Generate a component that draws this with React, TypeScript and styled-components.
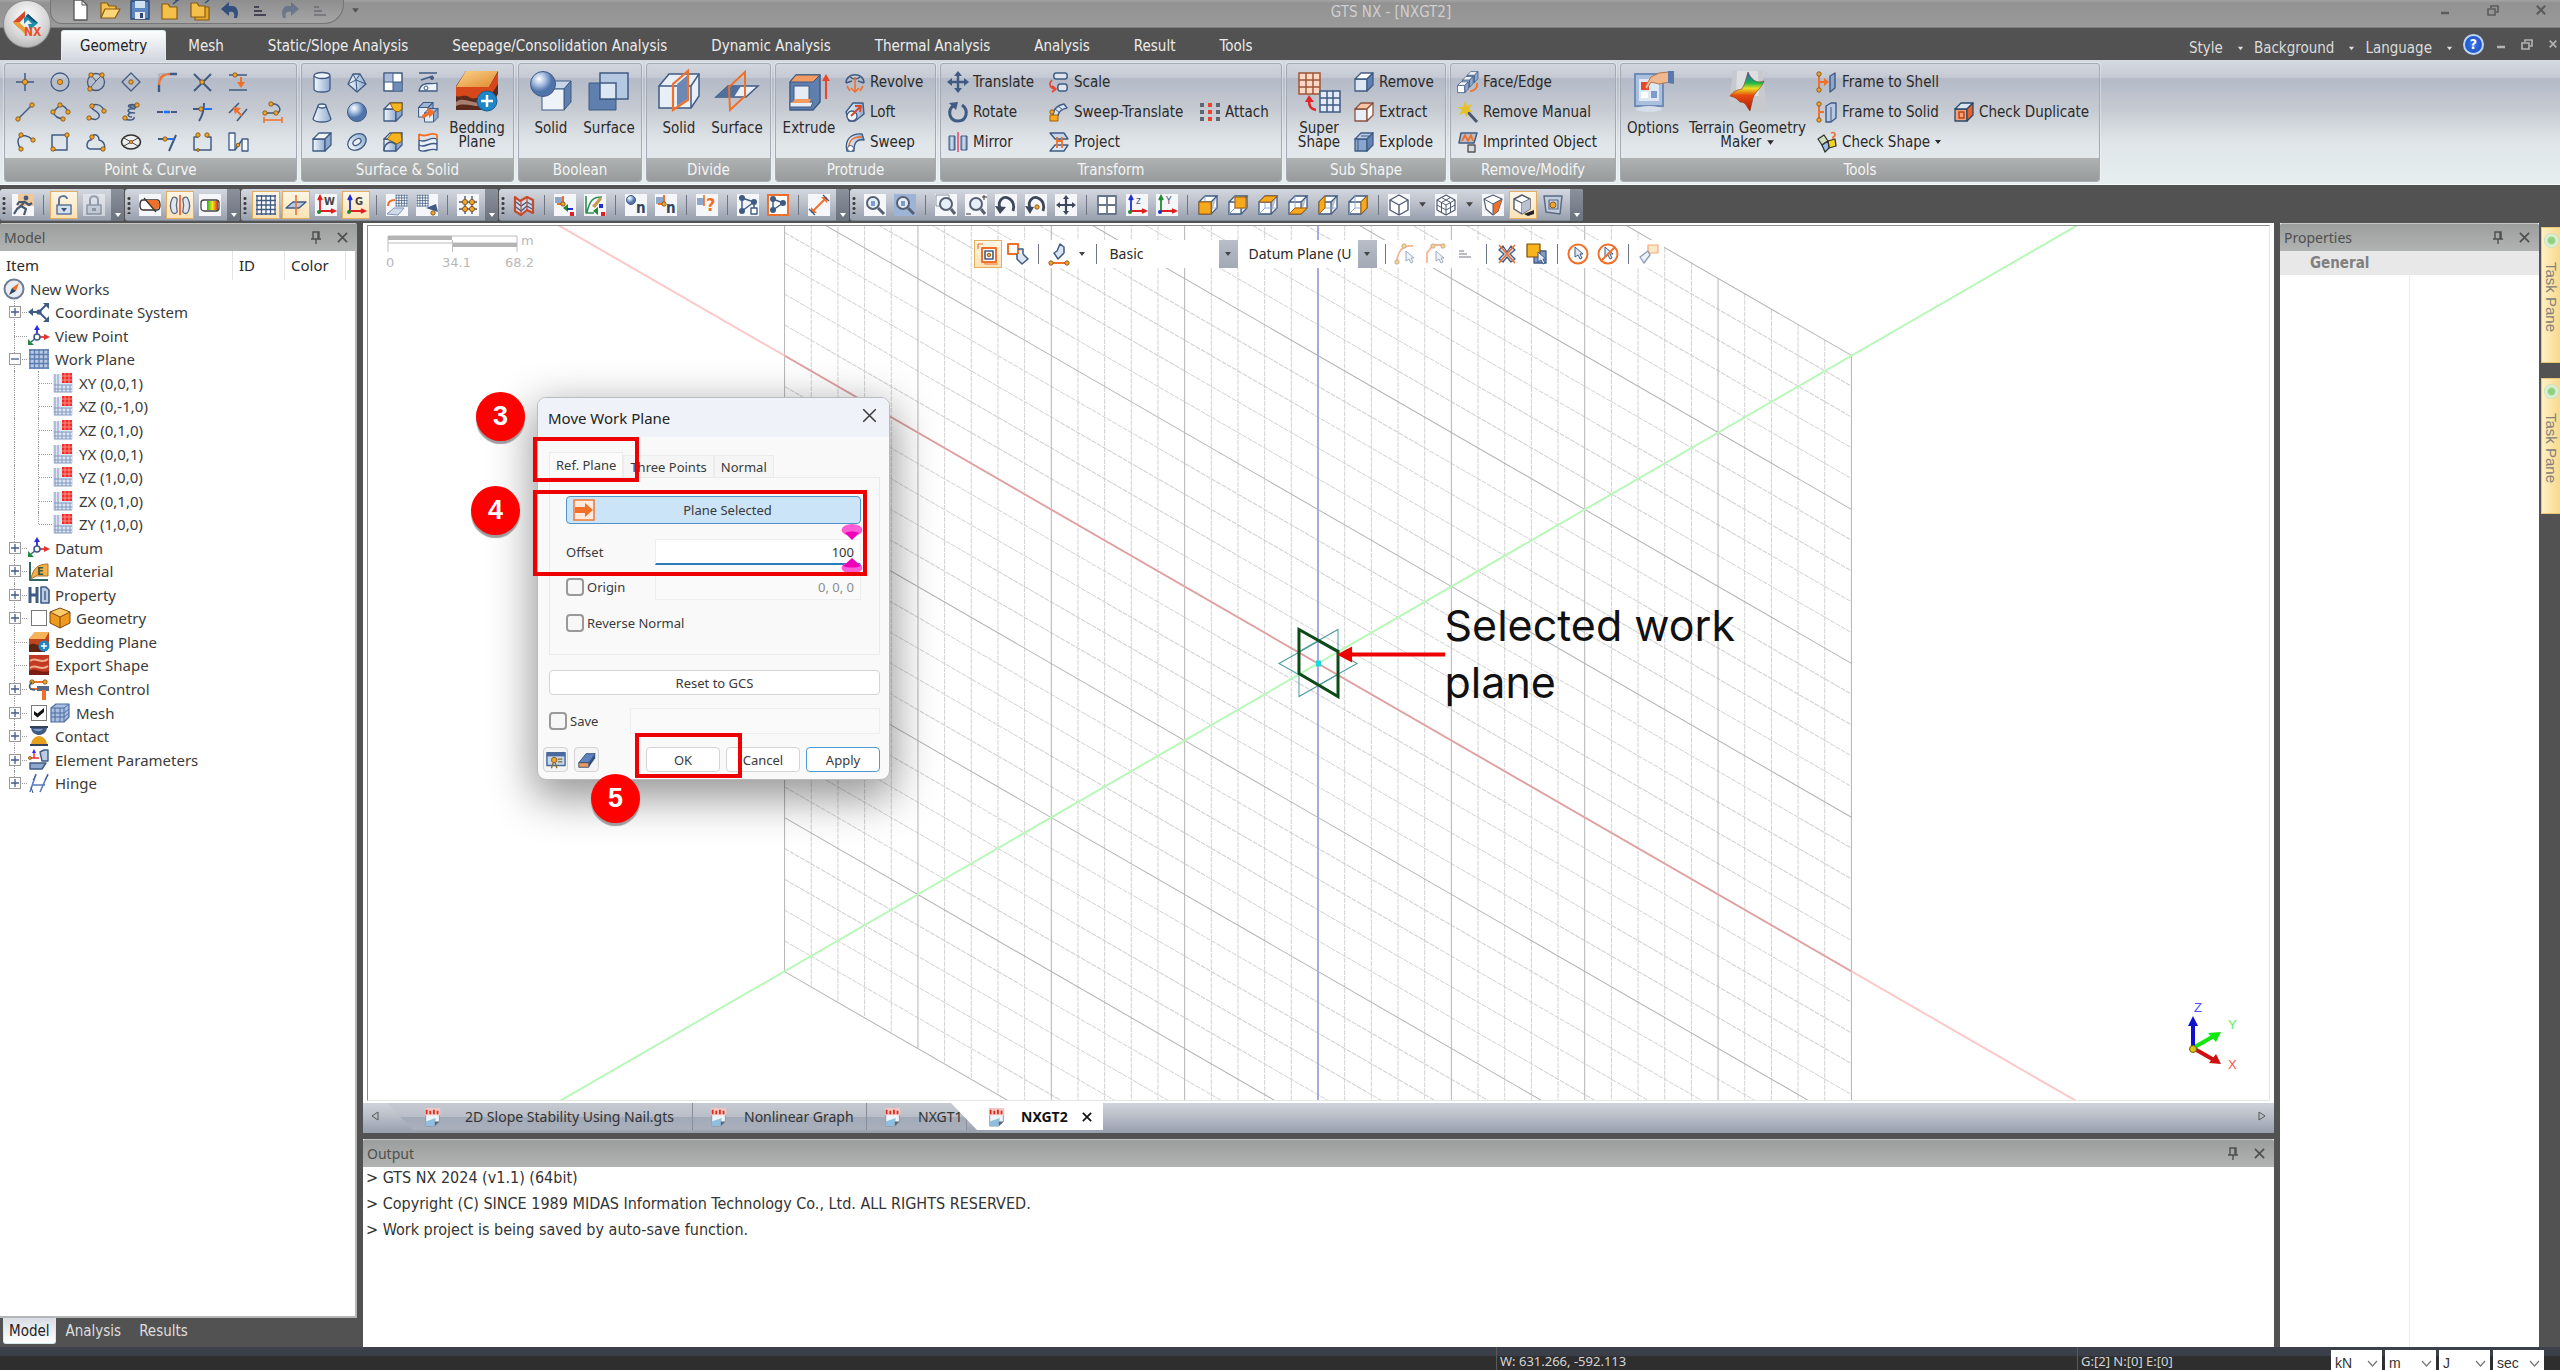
import React from 'react';
import styled, { createGlobalStyle, css } from 'styled-components';

/* ---------- palette and type ---------- */
const N = '#3f5b84';
const OR = '#f0702a';
const UI = '"DejaVu Sans Condensed", "Noto Sans", sans-serif';
const NOTO = '"Noto Sans", "Open Sans", sans-serif';

const Global = createGlobalStyle`
  *, *::before, *::after { box-sizing: border-box; }
  html, body { margin: 0; height: 100%; overflow: hidden; background: #525252; }
  body { font-family: ${UI}; font-size: 15px; color: #2a2a2a; }
  button, input, select { font: inherit; color: inherit; margin: 0; }
  button { background: none; border: 0; padding: 0; white-space: nowrap; }
  ul { list-style: none; margin: 0; padding: 0; }
`;

/* ---------- icon drawing helpers ---------- */
type El = React.ReactElement;
const l = (d: string, c = N, w = 1.5, f = 'none') => <path key={d + c} d={d} stroke={c} strokeWidth={w} fill={f} strokeLinejoin="round" />;
const f = (d: string, c: string) => <path key={d + c} d={d} fill={c} />;
const dot = (x: number, y: number, r = 2.2) => <circle key={`${x},${y}`} cx={x} cy={y} r={r} fill="#efa52a" stroke="#7a4a12" strokeWidth="0.8" />;
const ball = (x: number, y: number, r = 2.6) => <circle key={`b${x},${y}`} cx={x} cy={y} r={r} fill={N} />;
const cube = (front = 'url(#blue)', top = '#f2f6fb', side = '#8ea8cc', c = N) => (
  <g key={front + top + side} stroke={c} strokeWidth="1.3" strokeLinejoin="round">
    <path d="M2 8H14V20H2Z" fill={front} />
    <path d="M2 8L8 2H20L14 8Z" fill={top} />
    <path d="M14 8L20 2V14L14 20Z" fill={side} />
  </g>
);
const wire = (extra: El) => (
  <g>
    <path d="M2 8H14V20H2ZM2 8L8 2H20L14 8M20 2V14L14 20" fill="#fff" stroke={N} strokeWidth="1.3" />
    <path d="M8 2V14H20M8 14L2 20" stroke="#8aa4cc" strokeWidth="0.9" fill="none" />
    {extra}
  </g>
);
const grid = (c = N, n = 4, bg = '#fff') => (
  <g>
    <rect x="1" y="1" width="20" height="20" fill={bg} />
    {Array.from({ length: n + 1 }, (_, i) => 2 + (i * 18) / n).map(p => <path key={p} d={`M${p} 1V21M1 ${p}H21`} stroke={c} strokeWidth="1.3" />)}
  </g>
);
const lens = (x = 9, y = 9, r = 6) => (
  <g fill="none">
    <circle cx={x} cy={y} r={r} stroke="#566072" strokeWidth="2" fill="#e6eef8" />
    <path d={`M${x + r - 1} ${y + r - 1}L20 20`} stroke="#566072" strokeWidth="3" />
  </g>
);
const triad = (a: string, b: string, c: string) => (
  <g fill="none" strokeWidth="1.8"><path d="M5 17V3M3 6L5 2L7 6" stroke={a} /><path d="M5 17H19M16 15L20 17L16 19" stroke={b} /><circle cx="4" cy="18" r="2" fill={c} /></g>
);
const white = <rect key="w" width="22" height="22" fill="#f4f6f9" />;
const cursor = (x: number, y: number) => <path key={`c${x}`} d={`M${x} ${y}V${y + 10}L${x + 3} ${y + 8}L${x + 5} ${y + 12}L${x + 7} ${y + 11}L${x + 5} ${y + 7}H${x + 8}Z`} fill="#dfe8f5" stroke={N} />;

const ICONS: Record<string, React.ReactNode> = {
  point: <>{l('M11 2V20M2 11H20')}{dot(11, 11, 2.6)}</>,
  circle: <><circle cx="11" cy="11" r="9" fill="none" stroke={N} strokeWidth="1.3" />{dot(11, 11, 2.6)}</>,
  circle3: <><circle cx="11" cy="11" r="8.5" fill="none" stroke={N} strokeWidth="1.3" />{l('M6 4L11 10L17 4M11 10L5 17', N, 1)}{dot(6, 4)}{dot(17, 4)}{dot(5, 18)}</>,
  diamond: <>{l('M11 2L20 11L11 20L2 11Z', N, 1.3)}{dot(11, 11, 2.2)}</>,
  fillet: <>{l('M3 21V14M14 3H21', N, 2.4)}{l('M3 14C3 6 8 3 14 3', OR, 2.4)}{l('M3 12V3H12', '#9aa6ba', 1)}</>,
  cross: <>{l('M3 3L20 20M20 3L3 20', N, 2)}{dot(11, 11)}</>,
  drop: <>{l('M2 4H20M2 19H20', N, 1.6)}{dot(8, 4)}{l('M14 6V12', OR, 2)}{f('M10 11H18L14 17Z', OR)}</>,
  line: <>{l('M4 18L18 4')}{dot(4, 18)}{dot(18, 4)}</>,
  arc3: <>{l('M4 11L11 4C16 5 18 8 19 11M4 11C6 16 9 17 14 18')}{dot(11, 4)}{dot(4, 11)}{dot(19, 11)}{dot(14, 18)}</>,
  spline: <>{l('M19 10C17 2 6 2 7 7C8 10 16 11 14 16C12 20 8 18 4 17')}{dot(4, 17)}{dot(7, 5)}{dot(19, 10)}</>,
  helix: <>{l('M17 4C8 2 6 6 12 7C18 8 16 4 10 5M15 8C7 7 6 11 12 12M15 12C7 11 6 16 12 16M5 18C9 20 15 19 14 16')}{dot(17, 4)}{dot(5, 17)}</>,
  dash: <>{l('M1 11H7M15 11H21', N, 2)}{l('M8 11H14', '#1f6fff', 2.4)}</>,
  trim: <>{l('M2 8H11M13 2C13 12 10 17 8 20', N, 2)}{l('M12 8H21', '#1f6fff', 2)}{dot(10, 8)}</>,
  offset: <>{l('M2 12L12 2M10 20L20 8', N, 1.6)}{l('M15 15L9 9', OR, 2)}{f('M6 6L14 7L8 13Z', OR)}</>,
  dim: <>{l('M3 12H14M8 3C17 2 20 8 16 12')}{dot(9, 3)}{dot(3, 12)}{dot(14, 12)}{l('M2 19H20M2 16V22M20 16V22', OR, 1.5)}</>,
  arc: <>{l('M7 18C-1 8 8 -1 19 9')}{dot(7, 18)}{dot(19, 9)}{dot(7, 4)}</>,
  rect: <>{l('M3 4H18V19H3Z')}{dot(18, 4)}{dot(4, 18)}</>,
  closed: <>{l('M7 5C11 2 14 5 14 9C20 10 21 18 18 18H5C0 17 2 9 6 9Z')}{dot(7, 6)}{dot(18, 18)}</>,
  ellipse: <><ellipse cx="11" cy="11" rx="9.5" ry="7" fill="#eee" stroke="#333" strokeWidth="1.6" />{l('M4 7L18 15M18 7L4 15', '#444', 1)}{dot(11, 11, 1.6)}</>,
  extend: <>{l('M2 8H10M20 4L13 20', N, 2)}{l('M11 8H18', '#1f6fff', 2)}{dot(9, 8)}</>,
  openrect: <>{l('M7 6H3V19H20V6H16')}{dot(7, 4)}{dot(16, 4)}{dot(7, 19, 1.4)}</>,
  bars: <>{l('M2 2H8V19H2ZM15 8H21V20H15Z', N, 1.3, '#f4f7fb')}{l('M8 19L15 9')}{dot(11, 14, 1.8)}</>,
  cyl: <><path d="M3 5V18C3 22 19 22 19 18V5" fill="url(#blue)" stroke={N} strokeWidth="1.3" /><ellipse cx="11" cy="4.5" rx="8" ry="3" fill="#eef3fa" stroke={N} strokeWidth="1.3" /></>,
  gem: <>{l('M7 3L14 3L20 13L11 21L2 13Z', N, 1.3, 'url(#blue)')}{l('M7 3L10 9L20 13M10 9L11 21M14 3L10 9M2 13L10 9', N, 1)}</>,
  quad: <>{l('M2 2H20V20H2Z', N, 1.5, '#fff')}{f('M3 3H11V11H3Z', '#a9bcd9')}{f('M11 11H19V19H11Z', '#6f8cb8')}{l('M11 2V20M2 11H20', N, 1)}</>,
  terrain: <>{l('M2 2H20M2 20C5 9 13 14 20 12V20Z', N, 1.3, '#eef3fa')}{l('M4 9L16 5', N)}<circle cx="9" cy="17" r="2" fill="#fff" stroke={N} />{ball(15, 7, 2)}</>,
  cone: <><path d="M7 5L2 18C4 22 18 22 20 18L15 5" fill="url(#blue)" stroke={N} strokeWidth="1.3" /><ellipse cx="11" cy="5" rx="4" ry="2" fill="#eef3fa" stroke={N} strokeWidth="1.3" /></>,
  sphere: <circle cx="11" cy="11" r="9.5" fill="url(#ball)" stroke={N} />,
  filletcube: <>{cube()}<path d="M8 2H20V8C17 12 13 11 11 8Z" fill="#f7b41c" stroke="#8a5b10" /></>,
  twocube: <><g transform="scale(.8)">{cube('#e4ecf6', '#9fb6d6')}</g><g transform="translate(6 6) scale(.75)">{cube('#e4ecf6', '#9fb6d6')}</g><path d="M5 14L11 11V7L18 11L12 17V14L6 18Z" fill={OR} /></>,
  box: cube(),
  torus: <g transform="rotate(-35 11 11)"><ellipse cx="11" cy="11" rx="10" ry="7.5" fill="url(#blue)" stroke={N} strokeWidth="1.3" /><ellipse cx="11" cy="11" rx="4.5" ry="2.8" fill="#e8edf2" stroke={N} strokeWidth="1.3" /></g>,
  chamfer: <>{cube()}<path d="M5 8L10 2H19L20 10L15 13Z" fill="#f7b41c" stroke="#8a5b10" /><path d="M2 20C2 12 9 9 13 13" fill="none" stroke={N} strokeWidth="1.5" /></>,
  sheet: <>{l('M2 9C8 13 13 5 20 8V19C13 16 8 23 2 19Z', N, 1.4, '#e8eff8')}{l('M2 14C8 18 13 10 20 13', N)}{l('M2 3C8 8 13 0 20 4V8M2 3V9', OR, 1.8)}</>,
  revolve: <>{l('M2 12C2 1 20 1 20 12M2 12L8 10M20 12L14 10M5 5C9 9 13 9 17 5', N, 1.5)}{l('M11 6V21M7 17L11 21L15 17M3 15L6 20M19 15L16 20', OR, 1.6)}</>,
  loft: <>{l('M2 11L9 2H19L20 13L11 20H5Z', N, 1.4, 'url(#blue)')}<circle cx="8" cy="15" r="5" fill="#eef3fa" stroke={N} strokeWidth="1.3" />{l('M7 15L16 6M11 5L17 5L16 11', '#d9482a', 1.8)}</>,
  sweep: <>{l('M3 20C0 8 8 2 18 3L20 9C13 8 10 11 10 20Z', N, 1.4, 'url(#blue)')}{l('M5 18C4 9 10 5 18 6', OR, 1.6)}<circle cx="6.5" cy="17.5" r="3" fill="#fff" stroke={N} /></>,
  move: <>{l('M11 3V19M3 11H19', N, 2.4)}{f('M11 0L15 5H7ZM11 22L15 17H7ZM0 11L5 7V15ZM22 11L17 7V15Z', N)}</>,
  rotate: <>{l('M7 4C-1 10 3 20 11 20C20 20 22 9 15 4', N, 3)}{f('M2 2L11 1L9 9Z', N)}</>,
  mirror: <>{l('M2 5H8V19H2Z', N, 1, 'url(#bluev)')}{l('M14 5H20V19H14Z', N, 1, 'url(#bluev)')}{l('M11 1V21', '#ea5b7d', 1.8)}</>,
  scale: <>{l('M8 2H17C20 2 20 8 17 8H8C5 8 5 2 8 2Z', N, 1.5, '#dfe5ec')}{l('M12 13H17C20 13 20 20 17 20H12C9 20 9 13 12 13Z', N, 1.5, '#dfe5ec')}{l('M4 9C0 13 2 17 7 18M4 15L8 18L4 21', '#e8452a', 1.6)}</>,
  sweept: <>{l('M5 14C5 8 10 4 16 3L19 7C14 8 10 11 10 15', N, 1.4, '#dbe5f2')}{l('M7 8L12 12M10 5L15 9', N, 1)}<path d="M2 14H10V20H2Z" fill="#f7a81c" stroke="#a0600e" />{dot(4, 11)}</>,
  attach: <>{[2, 9, 16].map(y => <g key={y}><rect x="1" y={y} width="4" height="4" fill="#5d6672" /><rect x="9" y={y} width="4" height="4" fill="#e8452a" /><rect x="17" y={y} width="4" height="4" fill="#5d6672" /></g>)}</>,
  project: <>{l('M2 2H16L20 8H7Z', N, 1.4, '#c6d5ea')}{l('M2 20H16L20 14H7Z', N, 1.4, '#dfe8f4')}{l('M9 6V17M14 6V17M9 10H14', OR, 1.8)}</>,
  cremove: cube('#dce7f4', '#fff', '#5f80b0'),
  cextract: cube('#e8eff8', '#fbc6a5', '#fff', '#8a5240'),
  cexplode: <>{cube('#8ba6cc', '#b9cbe4', '#6282b2')}{l('M5 8V20M8 5H17', N, 1)}</>,
  face: <g transform="scale(.6)"><g transform="translate(15 -1)">{cube('#7f9cc8')}</g><g transform="translate(7 7)">{cube('#c6d5ea')}</g><g transform="translate(-1 16)">{cube('#fff')}</g>{l('M33 20C35 28 30 32 22 34', OR, 3)}</g>,
  wand: <>{l('M9 9L20 21', '#4a5870', 3)}{f('M8 0L10 5L15 3L12 8L16 11L11 11L10 16L7 12L2 14L5 9L0 6L6 6Z', '#e6c22a')}</>,
  imprint: <>{l('M4 2H20L17 12H2Z', N, 1.5, '#b9bfc8')}{l('M5 10L8 4L11 10L14 4L16 10', OR, 1.8)}{l('M11 14H18V21H11Z', '#555', 1.4, '#d7dade')}</>,
  frame: <>{l('M3 2V20M3 11H9', OR, 2)}{dot(3, 3)}{dot(3, 19)}{f('M8 7L13 11L8 15Z', OR)}{l('M14 5L19 2V17L14 21Z', N, 1.4, '#8ea8cc')}</>,
  frame2: <>{l('M3 2V20M3 11H8', OR, 2)}{dot(3, 3)}{dot(3, 19)}{l('M10 5L15 2H20V17L15 21H10Z', N, 1.4, '#b7c9e2')}{l('M15 6V21', N, 1)}</>,
  checks: <>{l('M2 8L8 4L12 10L6 14Z', '#333', 1.3, '#cfe0b8')}{l('M12 10L19 8L20 15L13 17Z', '#333', 1.3, '#f5d21c')}{l('M6 14L12 10L13 17L9 21Z', '#333', 1.3, '#9cc0e8')}{l('M15 2C20 0 20 5 17 6V8', OR, 1.6)}</>,
  checkd: <>{cube('#f3a27c', '#dbe5f1', '#e8602a', '#2a4a6a')}{l('M6 11H11V17H6Z', '#c33d10', 1.4)}</>,
  run: <>{white}<path d="M6 0H22V12H6Z" fill="#f0c89a" />{ball(14, 4, 2.4)}{l('M13 7L9 12L14 15L12 21M9 12L5 15L2 20M12 8L7 8L5 11M13 8L17 11L20 9', '#4a5870', 2.2)}</>,
  unlock: <>{l('M6 11V6C6 1 14 1 14 5', '#5d7598', 2)}{l('M4 11H18V20H4Z', '#5d7598', 1.5, '#d5e0ee')}{f('M8 14H14L11 18Z', N)}</>,
  lock: <g opacity=".55">{white}{l('M7 11V6C7 1 15 1 15 6V11', '#6d7c92', 2)}{l('M4 11H18V20H4Z', '#6d7c92', 1.5, '#d5dce5')}{f('M9 14H13V17H9Z', '#6d7c92')}</g>,
  pill: <>{white}{l('M4 6H18C22 6 22 16 18 16H4C0 16 0 6 4 6Z', '#333', 1.4, '#fff')}{f('M6 6H18C21 7 21 15 18 15H15Z', OR)}{l('M5 4L17 18', '#333', 1.2)}</>,
  pipe: <>{l('M3 5C1 9 1 14 3 18C5 21 9 19 8 16C7 12 7 10 8 7C9 3 4 2 3 5ZM19 5C21 9 21 14 19 18C17 21 13 19 14 16C15 12 15 10 14 7C13 3 18 2 19 5Z', '#5d6a80', 1.3, '#dfe6ee')}{l('M11 1V21', '#e8452a', 1.5)}</>,
  rainbow: <>{white}<rect x="2" y="6" width="18" height="11" rx="3" fill="#fff" stroke="#444" strokeWidth="1.3" /><rect x="8" y="7" width="11" height="9" fill="url(#rain)" /></>,
  grid: grid(),
  plane: <>{l('M1 14L8 8H21L14 14Z', N, 1.3, '#b9cbe4')}{l('M11 1V21', OR, 1.6)}</>,
  axW: <>{white}{triad('#e02020', '#e02020', '#208a30')}<text x="9" y="11" fontSize="11" fontWeight="700" fill="#444" fontFamily={UI}>W</text></>,
  axG: <>{triad('#2030d0', '#e02020', '#208a30')}<text x="10" y="11" fontSize="11" fontWeight="700" fill="#444" fontFamily={UI}>G</text></>,
  gridmove: <>{white}<g transform="translate(9 0) scale(.6)">{grid()}</g>{l('M1 20L8 14H18L12 21Z', '#7d93b8', 1, '#cfdaea')}{l('M2 12C2 7 5 6 9 6', OR, 2)}</>,
  gridpick: <>{white}<g transform="scale(.6)">{grid()}</g>{f('M10 14L20 10L22 18Z', N)}{dot(17, 19)}</>,
  hash: <>{white}{l('M8 2V20M15 2V20M2 8H20M2 15H20', '#4d5a70', 1.4)}{[8, 15].map(x => [8, 15].map(y => dot(x, y, 2.6)))}</>,
  fold: <>{l('M2 3L7 7L14 3L20 6V19L14 16L8 21L2 17Z', '#c8482a', 2.2, '#cfdbe9')}{l('M3 8L8 12L14 8L19 11M3 13L8 17L14 12L19 15', N, 1.4)}{l('M8 7V20M14 4V16', '#c8482a', 1.2)}</>,
  node1: <>{white}{l('M9 2V10M3 4H9M3 10H9', OR, 2)}<rect x="1" y="3" width="7" height="6" fill="#8ea8cc" />{dot(9, 10)}{f('M9 14L14 10V18Z', '#208a30')}{l('M13 15H19', '#2030d0', 2)}{f('M16 18H20V22H16Z', '#e02020')}</>,
  node2: <>{white}{l('M2 2V19H10M3 18C6 6 9 3 18 3', '#2f8f50', 1.6)}{f('M8 12L16 3L18 5L11 14Z', '#c79b52')}{f('M9 17L14 13V21Z', '#208a30')}{f('M15 10H19V14H15Z', '#2030d0')}{f('M17 18H21V22H17Z', '#e02020')}</>,
  nn1: <>{white}<circle cx="6" cy="6" r="4.5" fill="url(#ball)" stroke={N} /><text x="11" y="19" fontSize="15" fontWeight="700" fill="#33435e" fontFamily={UI}>n</text></>,
  nn2: <>{white}<rect x="1" y="3" width="7" height="7" fill="#8ea8cc" />{l('M9 1V10M3 10H10', OR, 2)}{dot(9, 10)}<text x="11" y="19" fontSize="15" fontWeight="700" fill="#33435e" fontFamily={UI}>n</text></>,
  ask: <>{white}<rect x="1" y="4" width="7" height="7" fill="#8ea8cc" />{l('M8 1V12', OR, 1.6)}<text x="10" y="17" fontSize="18" fontWeight="700" fill={OR} fontFamily={UI}>?</text></>,
  net1: <>{white}{l('M5 4L17 8L5 17ZM17 8V14')}{ball(5, 4, 3)}{ball(17, 8, 3)}{ball(5, 17, 3)}{l('M14 14H20V20H14Z', N, 1.4, '#fff')}</>,
  net2: <><rect x="1" y="1" width="20" height="20" fill="#fff" stroke={OR} strokeWidth="2" />{l('M6 5L16 9L6 16Z')}{ball(6, 5, 3)}{ball(16, 9, 3)}{ball(6, 16, 3)}</>,
  measure: <>{white}{l('M5 17L17 5', OR, 2)}{f('M3 13L9 19L3 19ZM13 3H19V9Z', OR)}{l('M1 15L7 21M15 1L21 7', N, 1.4)}</>,
  zoomA: <>{white}{lens()}{f('M7 7H11V12H7Z', '#7f9cc8')}</>,
  zoomB: <><rect width="22" height="22" fill="#9db3d8" />{lens()}{f('M7 7H11V12H7Z', '#7f9cc8')}</>,
  zoomC: <>{white}{l('M1 1H14V12H1Z', '#8a94a4', 1)}{lens(11, 10, 6)}</>,
  zoomD: <>{white}{lens(11, 10, 6)}{l('M17 3H22M19 1V6M1 20H6', '#333', 1)}</>,
  rot1: <>{white}{l('M5 14C2 6 9 2 13 4C18 6 20 12 18 17', '#3d475a', 2.8)}{f('M0 12L11 13L5 20Z', '#3d475a')}</>,
  rot2: <>{white}{l('M5 14C2 6 9 2 13 4C18 6 20 12 18 17', '#3d475a', 2.8)}{f('M0 12L9 13L5 20Z', '#3d475a')}{dot(12, 13)}</>,
  pan: <>{white}{l('M11 4V18M4 11H18', '#3d475a', 2.2)}{f('M11 1L14 5H8ZM11 21L14 17H8ZM1 11L5 8V14ZM21 11L17 8V14Z', '#3d475a')}</>,
  four: <>{l('M2 2H20V20H2Z', '#66748c', 1.8, '#fff')}{l('M11 2V20M2 11H20', '#66748c', 1.8)}</>,
  axz: <>{white}{triad('#2030d0', '#e02020', '#208a30')}<text x="10" y="10" fontSize="10" fill={N} fontFamily={UI}>z</text></>,
  axy: <>{white}{triad('#208a30', '#e02020', '#2030d0')}<text x="10" y="10" fontSize="10" fill={N} fontFamily={UI}>Y</text></>,
  vFront: wire(<rect x="2" y="8" width="12" height="12" fill="#f7a81c" stroke="#a0600e" />),
  vBack: wire(<rect x="8" y="3" width="11" height="11" fill="#f7a81c" stroke="#a0600e" />),
  vTop: wire(<path d="M2 8L8 2H20L14 8Z" fill="#f7a81c" stroke="#a0600e" />),
  vBottom: wire(<path d="M2 20L8 14H20L14 20Z" fill="#f7a81c" stroke="#a0600e" />),
  vLeft: wire(<path d="M2 8L8 2V14L2 20Z" fill="#f7a81c" stroke="#a0600e" />),
  vRight: wire(<path d="M14 8L20 2V14L14 20Z" fill="#f7a81c" stroke="#a0600e" />),
  hex: <>{white}{l('M11 1L20 6V16L11 21L2 16V6Z', '#4d5a70', 1.4, '#fff')}{l('M2 6L11 11L20 6M11 11V21', '#4d5a70', 1.4)}</>,
  hexmesh: <>{white}{l('M11 1L20 6V16L11 21L2 16V6Z', '#4d5a70', 1.2, '#fff')}{l('M2 6L11 11L20 6M11 11V21M2 11L11 16L20 11M6.5 3.5L15.5 8.5V18.5M15.5 3.5L6.5 8.5V18.5', '#4d5a70', 1)}</>,
  shade: <>{white}{l('M11 1L20 5L16 17L11 21L4 15L2 5Z', '#4d5a70', 1.2, '#fff')}{f('M11 10L20 5L16 17L11 21Z', OR)}{l('M2 5L11 10L20 5M11 10V21', '#4d5a70', 1)}</>,
  solidhex: <><path d="M12 20L22 16V20L16 22Z" fill="#222" />{l('M10 1L18 5V15L10 20L2 15V5Z', '#4d5a70', 1.4, '#fff')}{l('M2 5L10 9L18 5M10 9V20', '#4d5a70', 1.2)}{f('M10 9L18 5V15L10 20Z', '#b9c2ce')}</>,
  persp: <>{l('M2 2H20L18 20L4 18Z', '#5a6a86', 1.5, '#c3cddc')}{l('M7 6H16V15H7Z', '#5a6a86', 1.2)}{dot(11, 11, 3)}</>,
  selA: <>{l('M1 1H6M1 1V6M21 21H8V8', OR, 1.2)}{l('M5 5H19V19H5Z', OR, 2, '#fff')}{l('M8 8H16V16H8Z', N, 1.6)}{dot(12, 12, 1.8)}</>,
  selB: <>{l('M1 1H11V11H1Z', OR, 2, '#fff')}{l('M11 6H16V11M16 11L21 16L15 21L10 16V11', N, 1.5, '#dbe5f2')}</>,
  selC: <>{l('M2 20H20', OR, 2)}{dot(3, 20)}{dot(19, 20)}{l('M12 1L16 4V10L10 16L6 10L9 8Z', N, 1.5, '#dbe5f2')}</>,
  selD: <g opacity=".5">{l('M2 20C2 8 8 2 18 3', OR, 1.8)}{dot(9, 3)}{dot(2, 19)}{cursor(11, 8)}</g>,
  selE: <g opacity=".5">{l('M2 20V10L8 2H18', OR, 1.8)}{dot(8, 3)}{dot(18, 3)}{cursor(11, 8)}</g>,
  list: <g opacity=".4">{l('M4 8H9M4 11H12M4 14H16', '#556', 2)}</g>,
  xsel: <>{l('M3 7L7 3L11 9L15 3L19 7L14 11L19 16L15 19L11 14L7 19L3 16L8 11Z', N, 1.3, '#dbe5f2')}{l('M3 2L19 20M19 2L3 20', OR, 1.6)}</>,
  qsel: <>{l('M8 8H20V20H8Z', N, 1.3, '#7f9cc8')}{l('M1 1H14V14H1Z', '#7a4a12', 1.2, '#f7b41c')}{cursor(12, 9)}</>,
  csel: <><circle cx="11" cy="11" r="9.5" fill="#fff" stroke={OR} strokeWidth="2" />{cursor(8, 4)}</>,
  cno: <><circle cx="11" cy="11" r="9.5" fill="#fff" stroke={OR} strokeWidth="2" />{cursor(8, 4)}{l('M4 18L18 4', OR, 2)}</>,
  brush: <g opacity=".6">{l('M10 2H20V10H10Z', OR, 1.2, '#f8d8a0')}{l('M10 8L2 14L6 20L12 12Z', N, 1.3, '#dfe8f5')}</g>,
  doc: <>{l('M3 2H18V16L13 21H3Z', '#8a94a4', 1, '#eef4fb')}{f('M2 1H19V9H2Z', '#f3c8c4')}{l('M4 8V3M8 8V4M12 8V3M16 8V4', '#e02a1a', 2)}{f('M3 16L14 12L13 21H3Z', '#8fbede')}{f('M13 21L18 16H13Z', '#5a6472')}</>,
  coord: <>{l('M2 11H11L18 4M11 11L18 18', N, 2)}{f('M0 11L5 7V15Z', N)}{ball(11, 11)}{f('M15 2H21V8ZM15 21H21V15Z', N)}</>,
  datum: <>{l('M9 11V4', '#2a2af0', 1.8)}{f('M9 0L12 5H6Z', '#2a2af0')}{l('M10 12H16', '#e83030', 1.8)}{f('M22 12L16 9V15Z', '#e83030')}{l('M8 13L3 17', N, 1.4)}{f('M0 14V20H6Z', '#208a40')}<circle cx="9" cy="12" r="3" fill="#fff" stroke={N} strokeWidth="1.6" /></>,
  wp: grid('#5d7db0', 4, '#b9cae6'),
  wpi: <>{f('M1 2H21V20H1Z', '#dfe6f2')}{l('M3 2V20M6 2V20M2 17H20M2 20H20M2 13H20M10 13V20M14 13V20M18 13V20', '#8098c0', 1)}<rect x="10" y="1" width="10" height="10" fill="#f02a2a" />{l('M13 1V11M17 1V11M10 4H20M10 8H20', '#ff9080', 1)}</>,
  mat: <>{l('M2 2V20H20', '#2a6a60', 2)}{l('M3 19C5 8 10 4 20 4V16H8Z', '#a8742a', 1, '#f5b04a')}<text x="9" y="15" fontSize="11" fontWeight="700" fill="#3a5a3a" fontFamily={UI}>E</text></>,
  prop: <>{l('M2 3V19M9 3V19M2 11H9', N, 3)}{l('M13 3H18L21 6V19H13Z', N, 1.6, '#bccce4')}{l('M17 7V16', N, 1.4)}</>,
  geo: <>{f('M11 1L21 5V16L11 21L1 16V5Z', '#ef9a1c')}{f('M11 1L21 5L11 10L1 5Z', '#fccb6a')}{l('M1 5L11 10L21 5M11 10V21', '#7a4a12', 1)}{l('M11 1L21 5V16L11 21L1 16V5Z', '#7a4a12', 1)}</>,
  bed: <>{f('M1 8L7 1H21V14L15 21H1Z', '#c0451c')}{f('M1 8L7 1H21L17 8Z', '#f5b45a')}{f('M1 14C7 10 12 18 17 13V21H1Z', '#5d2412')}<circle cx="16" cy="15" r="5.5" fill="#1f86c8" />{l('M16 12V18M13 15H19', '#fff', 1.4)}</>,
  exp: <>{f('M1 1H21V21H1Z', '#c23a24')}{l('M2 7C8 2 13 11 20 5M2 14C8 9 13 18 20 12', '#f0b090', 2)}{f('M1 17C8 13 13 20 21 17V21H1Z', '#7a1c10')}</>,
  mctl: <>{l('M3 4H18M2 11H10', OR, 2)}{dot(4, 4)}{dot(17, 4)}{l('M4 4C0 8 1 12 7 12', N, 1.6)}{f('M9 8H21V13H9Z', '#5a6a86')}{f('M14 12H18V22H14Z', OR)}</>,
  mesh: <>{l('M2 6L7 2H20V15L15 20H2Z', '#4d6ca0', 1.2, '#a9bfe2')}{l('M2 11H15M2 15H15M6 6V20M11 6V20M2 6H15V20M15 6L20 2M15 11L20 7M15 15L20 11', '#4d6ca0', 1)}</>,
  contact: <>{f('M3 2H19C19 8 14 10 11 10C8 10 3 8 3 2Z', N)}{f('M3 20C3 14 8 11 11 11C14 11 19 14 19 20Z', '#e8a01c')}{l('M2 2H20M2 20H20', '#33435e', 2)}{f('M5 4H15C13 7 8 7 5 4Z', '#7f9cc8')}</>,
  elem: <>{l('M6 2V9M3 9H11', '#e83030', 1.4)}{f('M6 0L8 4H4Z', '#2a2af0')}{dot(2, 9, 1.5)}{l('M12 3L16 1H20V12H14Z', N, 1.4, '#bccce4')}{l('M2 14H18L14 20H2Z', N, 1.4, '#8ea8cc')}</>,
  hinge: <>{l('M8 2L2 20M20 2L12 20M4 13H17', '#5a78c0', 1.6)}{l('M5 8L8 3M17 8L20 3M3 15L5 21', N, 1)}</>,
  compass: <><circle cx="11" cy="11" r="9.5" fill="#e8edf3" stroke="#6d7c92" strokeWidth="2" />{f('M16 5L13 13L9 10Z', OR)}{f('M6 17L13 13L9 10Z', '#33435e')}</>,
  arrowin: <><rect x="1" y="1" width="20" height="20" fill="#ffe9dc" stroke={OR} strokeWidth="1.4" />{f('M2 8H12V4L20 11L12 18V14H2Z', OR)}</>,
  preview: <>{l('M1 3H21V17H1Z', '#4a6a9c', 1.6, '#c6d8f0')}{f('M1 3H21V7H1Z', '#4a6a9c')}{dot(9, 11, 3)}{l('M13 10H18M13 13H18M8 14L6 20M10 14L12 20', '#8a6a2a', 1.4)}</>,
  eraser: <>{l('M2 14L10 4H20L13 14Z', '#33507c', 1, '#5d82bd')}{l('M2 14H13V19H2Z', '#33507c', 1, '#f09a5a')}{f('M13 14L20 4V9L13 19Z', '#33507c')}</>,
  qnew: <>{l('M5 1H13L18 6V21H5Z', '#555', 1.3, '#fff')}{l('M13 1V6H18', '#555', 1)}</>,
  qopen: <>{l('M2 19V4H8L10 7H17V10', '#8a5b10', 1.2, '#f5c04a')}{l('M2 19L6 10H21L16 19Z', '#8a5b10', 1.2, '#fbd67a')}</>,
  qsave: <>{l('M2 2H20V20H2Z', '#2a4a7c', 1.4, '#5d86c0')}{f('M6 2H16V9H6Z', '#cfe0f0')}{f('M6 13H16V20H6Z', '#e8e8e8')}{f('M11 14H14V19H11Z', '#2a4a7c')}</>,
  qfold: <>{l('M3 5H9L11 8H18V20H3Z', '#8a5b10', 1.2, '#f5c04a')}{l('M14 5L19 1M16 1H20', '#33507c', 1.4)}</>,
  qfold2: <>{l('M6 8H20V21H6Z', '#8a5b10', 1.2, '#e0a82a')}{l('M2 4H8L10 7H16V18H2Z', '#8a5b10', 1.2, '#f5c04a')}{l('M16 4L20 1', '#33507c', 1.4)}</>,
  undo: <>{f('M2 10L10 3V7H14C19 8 20 14 18 19H15C16 14 15 12 10 13V17Z', '#33507c')}</>,
  redo: <g opacity=".45">{f('M20 10L12 3V7H8C3 8 2 14 4 19H7C6 14 7 12 12 13V17Z', '#33507c')}</g>,
  qlist: <>{l('M5 8H10M5 12H13M5 16H17', '#445', 2)}</>,
  qlist2: <g opacity=".4">{l('M5 8H10M5 12H13M5 16H17', '#445', 2)}</g>,
};

const BIG: Record<string, React.ReactNode> = {
  bedding: <><path d="M1 16L11 1H43V24L34 40H1Z" fill="#5b2a1c" /><path d="M1 17L11 1H43L34 17Z" fill="url(#sand)" /><path d="M1 17H34L43 2V14L34 28C26 22 22 32 14 27C9 24 5 28 1 26Z" fill="#d8471a" /><path d="M1 32C10 25 20 38 34 30V34C22 40 12 31 1 36Z" fill="#a88070" /><circle cx="32" cy="31" r="10" fill="#1f86c8" stroke="#0f5f96" /><path d="M32 25V37M26 31H38" stroke="#fff" strokeWidth="2.5" /></>,
  bsolid: <><path d="M14 19L20 11H42L35 19Z" fill="#c8d6e8" stroke={N} /><path d="M35 19L42 11V32L35 40Z" fill="#5f7fae" stroke={N} /><rect x="13" y="19" width="22" height="21" fill="#eef3f9" stroke={N} /><circle cx="14" cy="14" r="12.5" fill="url(#ball)" stroke={N} /></>,
  bsurf: <><path d="M2 13H29V40H2Z" fill="#5f7fae" stroke={N} /><path d="M13 3H41V29H13Z" fill="#b4c8e2" stroke={N} strokeWidth="1.5" /><path d="M13 13H29V29H13Z" fill="#dde7f3" stroke={N} strokeWidth="1.5" /></>,
  dsolid: <><path d="M2 16L12 4H42V26L34 38H2Z" fill="#e9eff7" stroke={N} strokeWidth="1.5" /><path d="M2 16H34L42 4M34 16V38" fill="none" stroke={N} strokeWidth="1.5" /><path d="M20 14L32 4V28L20 36Z" fill="#6d88b4" /><path d="M16 14L31 1V30L16 40Z" fill="none" stroke={OR} strokeWidth="2.2" /></>,
  dsurf: <><path d="M1 27L13 16H43L31 27Z" fill="#e9eff7" stroke={N} strokeWidth="1.5" /><path d="M1 27L13 16H26L19 27Z" fill="#4f6f9f" /><path d="M14 17L30 2V26L15 40Z" fill="none" stroke={OR} strokeWidth="2" /></>,
  extrude: <><path d="M3 12L9 5H33V32L26 40H3Z" fill="#5f7fae" stroke={N} strokeWidth="1.5" /><path d="M3 12L9 5H33L26 12Z" fill="#f59a60" stroke={N} /><path d="M7 16H22V32H7Z" fill="#e6ecf3" stroke={N} /><path d="M3 32H26L24 37H3Z" fill="#e8eef5" stroke={N} /><path d="M4 33L9 29H24L22 33Z" fill="#f59a60" /><path d="M39 8V29" stroke="#e8452a" strokeWidth="2" /><path d="M35 11L39 4L43 11Z" fill="#e8452a" /></>,
  sshape: <><g fill="#fbd9c2" stroke="#a0563a" strokeWidth="1.5"><path d="M2 3H23V24H2ZM9 3V24M16 3V24M2 10H23M2 17H23" /></g><g fill="#e2ebf7" stroke={N} strokeWidth="1.5"><path d="M23 21H43V42H23ZM30 21V42M36 21V42M23 28H43M23 35H43" /></g><path d="M12 30C12 37 14 39 19 40" stroke="#e02828" strokeWidth="2.5" fill="none" /><path d="M8 32L12 25L17 32Z" fill="#e02828" /></>,
  options: <><rect x="4" y="4" width="28" height="32" fill="#a9bfdb" stroke="#6d8db8" strokeWidth="2" /><rect x="8" y="9" width="20" height="22" fill="#dfe9f5" /><rect x="10" y="12" width="8" height="8" fill="#e8452a" /><rect x="20" y="21" width="6" height="7" fill="#7f9cc8" /><rect x="10" y="22" width="7" height="6" fill="#fff" /><path d="M14 17L20 7L28 3L38 2V12L28 14L20 12L16 19Z" fill="#f0b890" stroke="#b8764a" /><path d="M37 1H43V14L37 13Z" fill="#5a7aac" /><ellipse cx="18" cy="39" rx="13" ry="3" fill="#d5dee9" /></>,
  terrain: <><path d="M7 1H36L42 42H2Z" fill="#c6c9ce" /><path d="M11 1H32L33 26H10Z" fill="#dcdee2" /><path d="M22 2C25 9 30 14 38 11C36 18 30 20 27 28L24 41C20 36 20 32 14 32C11 29 9 27 4 26C8 20 12 20 16 19C19 14 20 8 22 2Z" fill="url(#rainv)" stroke="#8a3a10" strokeWidth=".6" /></>,
};

const Svg = styled.svg<{ $s: number }>`width: ${p => p.$s}px; height: ${p => p.$s}px; flex: none; display: block; overflow: visible;`;
const Icon = ({ n, s = 22 }: { n: string; s?: number }) => <Svg $s={s} viewBox="0 0 22 22" fill="none" aria-hidden="true">{ICONS[n]}</Svg>;
const BigIcon = ({ n }: { n: string }) => <Svg $s={44} viewBox="0 0 44 44" fill="none" aria-hidden="true">{BIG[n]}</Svg>;

const HiddenSvg = styled.svg`position: absolute; width: 0; height: 0;`;
const Defs = () => (
  <HiddenSvg aria-hidden="true"><defs>
    <linearGradient id="blue"><stop offset="0" stopColor="#f4f8fc" /><stop offset="1" stopColor="#8fabd0" /></linearGradient>
    <linearGradient id="bluev"><stop offset="0" stopColor="#6d8db8" /><stop offset=".5" stopColor="#dbe6f2" /><stop offset="1" stopColor="#4f6f9f" /></linearGradient>
    <radialGradient id="ball" cx=".35" cy=".3"><stop offset="0" stopColor="#fff" /><stop offset=".5" stopColor="#a9c0e2" /><stop offset="1" stopColor="#4f73ab" /></radialGradient>
    <linearGradient id="rain"><stop offset="0" stopColor="#1db52a" /><stop offset=".5" stopColor="#f2e81c" /><stop offset="1" stopColor="#e82020" /></linearGradient>
    <linearGradient id="rainv" x2="0" y2="1"><stop offset="0" stopColor="#2255e0" /><stop offset=".28" stopColor="#1db54a" /><stop offset=".42" stopColor="#e8e020" /><stop offset=".6" stopColor="#e84a10" /><stop offset="1" stopColor="#b01808" /></linearGradient>
    <linearGradient id="sand" x2="1" y2="1"><stop offset="0" stopColor="#fbd48a" /><stop offset="1" stopColor="#e08a30" /></linearGradient>
  </defs></HiddenSvg>
);

/* ---------- window chrome ---------- */
const Shell = styled.div`height: 100vh; display: flex; flex-direction: column; position: relative;`;
const TitleBar = styled.header`
  height: 28px; flex: none; display: grid; grid-template-columns: 1fr auto 1fr; padding-left: 50px;
  background: linear-gradient(#a3a3a3, #929292 12%, #9a9a9a); border-bottom: 1px solid #7d7d7d;
`;
const Title = styled.h1`margin: 0; font: 400 15px/24px ${UI}; color: #cfcfcf; padding-left: 172px;`;
const QuickArea = styled.div`display: flex; align-items: flex-start;`;
const QuickBar = styled.div`
  height: 24px; width: 294px; display: flex; align-items: center; gap: 8px; padding: 0 0 4px 18px;
  background: linear-gradient(#8e8e8e, #a6a6a6); border: 1px solid #757575; border-top: 0; border-radius: 0 0 20px 12px;
`;
const QuickMore = styled.button`width: 22px; height: 20px; color: #555; display: grid; place-items: center;`;
const WinButtons = styled.div<{ $dark?: boolean }>`
  display: flex; justify-content: flex-end; align-items: center; gap: ${p => (p.$dark ? 12 : 34)}px;
  padding-right: ${p => (p.$dark ? 0 : 12)}px; padding-bottom: ${p => (p.$dark ? 0 : 8)}px; color: ${p => (p.$dark ? '#b4b4b4' : '#5c5c5c')};
`;
const WinButton = styled.button`width: 14px; height: 16px; display: grid; place-items: center;`;
const Min = () => <svg width="12" height="12"><path d="M2 9H10" stroke="currentColor" strokeWidth="2.5" /></svg>;
const Restore = () => <svg width="12" height="12" fill="none"><path d="M1 5H8V11H1ZM4 4V2H11V8H9" stroke="currentColor" strokeWidth="1.6" /></svg>;
const Cross = ({ s = 12, w = 2 }: { s?: number; w?: number }) => <svg width={s} height={s} viewBox="0 0 12 12"><path d="M1 1L11 11M11 1L1 11" stroke="currentColor" strokeWidth={w} /></svg>;
const Caret = ({ s = 8 }: { s?: number }) => <svg width={s} height={s} viewBox="0 0 8 8"><path d="M1 2H7L4 6Z" fill="currentColor" /></svg>;
const Pin = () => <svg width="12" height="14" fill="none"><path d="M3 1H9V8H3ZM1 8H11M6 8V13M8 1V8" stroke="currentColor" strokeWidth="1.4" /></svg>;

const Orb = styled.button`
  position: absolute; left: 3px; top: 0; width: 48px; height: 48px; border-radius: 50%; z-index: 2;
  background: radial-gradient(circle at 50% 35%, #fff, #d5d5d5 55%, #a4a4a4); border: 1px solid #8c8c8c;
  display: grid; place-items: center;
`;

const MenuBar = styled.nav`height: 32px; flex: none; display: flex; align-items: flex-end; padding-left: 61px; background: #525252;`;
const MenuTab = styled.button<{ $on?: boolean }>`
  height: 30px; padding: 2px 22px 0; color: #ececec; line-height: 28px;
  ${p => p.$on && css`color: #222; background: linear-gradient(#fdfefe, #d3d8df); border-radius: 3px 3px 0 0; border: 1px solid #d8eef2; border-bottom: 0; padding: 1px 18px 0;`}
`;
const MenuRight = styled.div`margin-left: auto; display: flex; align-items: center; height: 32px; gap: 10px; color: #dcdcdc;`;
const MenuDrop = styled.button`display: flex; align-items: center; gap: 14px; padding-top: 8px;`;
const Help = styled.button`
  width: 21px; height: 21px; border-radius: 50%; background: radial-gradient(#3a78f0, #1648b8); border: 2px solid #bcd4f8;
  color: #fff; font: 700 14px/16px ${UI};
`;

/* ---------- ribbon ---------- */
const Ribbon = styled.section`
  height: 125px; flex: none; display: flex; gap: 4px; padding: 3px 4px 2px; border-bottom: 1px solid #f5fafa;
  background: linear-gradient(#d6dae1, #c5c9d3 14%, #b4bac7 15%, #c4c9d1 38%, #dfe4e8 65%, #e6eff0);
`;
const Panel = styled.div<{ $w: number }>`
  width: ${p => p.$w}px; flex: none; display: flex; flex-direction: column; overflow: hidden;
  border: 1px solid #a4aab3; border-radius: 3px; box-shadow: 0 0 0 1px rgba(255,255,255,.35);
`;
const PanelBody = styled.div`flex: 1; display: flex; padding: 3px 2px 0;`;
const PanelName = styled.div`
  height: 23px; line-height: 24px; text-align: center; color: #f4f4f4;
  background: linear-gradient(#aeb2b2, #989b9b);
`;
const IconGrid = styled.div<{ $cols: number; $w: number }>`
  width: ${p => p.$w}px; display: grid; grid-template-columns: repeat(${p => p.$cols}, 1fr); grid-auto-rows: 30px;
`;
const Tool = styled.button`display: grid; place-items: center; height: 30px;`;
const BigTool = styled.button<{ $w: number }>`
  width: ${p => p.$w}px; display: flex; flex-direction: column; align-items: center; padding-top: 3px; gap: 7px; line-height: 14px;
  white-space: pre-line;
`;
const Column = styled.div<{ $w: number }>`width: ${p => p.$w}px; display: grid; grid-template-rows: repeat(3, 30px);`;
const Cmd = styled.button`display: flex; align-items: center; gap: 4px; padding-left: 4px; text-align: left;`;

type Item = { icon: string; label: string; drop?: boolean } | null;
const c = (icon: string, label: string, drop?: boolean): Item => ({ icon, label, drop });
const Cmds = ({ w, items }: { w: number; items: Item[] }) => (
  <Column $w={w}>{items.map((it, i) => (it ? <Cmd key={it.label}><Icon n={it.icon} />{it.label}{it.drop && <Caret />}</Cmd> : <span key={i} />))}</Column>
);
const Big = ({ w, icon, children }: { w: number; icon: string; children: React.ReactNode }) => (
  <BigTool $w={w}><BigIcon n={icon} /><span>{children}</span></BigTool>
);
const Tools = ({ w, cols, items }: { w: number; cols: number; items: string[] }) => (
  <IconGrid $cols={cols} $w={w}>{items.map((n, i) => (n ? <Tool key={n} aria-label={n}><Icon n={n} /></Tool> : <span key={i} />))}</IconGrid>
);
const Group = ({ name, w, children }: { name: string; w: number; children: React.ReactNode }) => (
  <Panel $w={w}><PanelBody>{children}</PanelBody><PanelName>{name}</PanelName></Panel>
);

/* ---------- icon toolbars ---------- */
const BarRow = styled.div`height: 38px; flex: none; display: flex; gap: 1px; padding: 4px 0 2px; background: #525252;`;
const Bar = styled.div<{ $first?: boolean }>`
  display: flex; align-items: center; height: 32px; border-radius: 3px;
  background: linear-gradient(#d3d7de, #bcc1cb 45%, #98a0ae); border-bottom: 1px solid #7f8694;
  &::before { content: ''; width: ${p => (p.$first ? 8 : 10)}px; height: 18px; flex: none;
    background: radial-gradient(circle at 50% 50%, #3c3c3c 1px, transparent 2px) 0 0 / 8px 5px repeat-y; }
`;
const BarButton = styled.button<{ $on?: boolean }>`
  width: 28px; height: 28px; margin: 0 1px; display: grid; place-items: center;
  ${p => p.$on && css`background: linear-gradient(#fdf6e6, #fbe2b4); border: 1px solid #e2ae62;`}
`;
const Sep = styled.i`width: 1px; height: 20px; margin: 0 5px; background: #6f7682; flex: none;`;
const BarDrop = styled.button`width: 17px; height: 28px; color: #444; display: grid; place-items: center;`;
const BarEnd = styled.button`
  width: 13px; height: 32px; margin-left: 2px; border-radius: 0 3px 3px 0; background: linear-gradient(#8c929c, #6b727f); color: #fff;
  display: flex; align-items: flex-end; justify-content: center; padding-bottom: 2px;
`;
const BARS = [
  'run|unlock* lock', 'pill pipe* rainbow', 'grid* plane* axW axG*|gridmove gridpick|hash',
  'fold|node1 node2|nn1 nn2|ask|net1 net2|measure',
  'zoomA zoomB|zoomC zoomD rot1 rot2 pan|four axz axy|vFront vBack vTop vBottom vLeft vRight|hex+ hexmesh+ shade solidhex* persp',
];

/* ---------- docked panels ---------- */
const Main = styled.main`flex: 1; min-height: 0; display: flex; gap: 6px;`;
const LeftDock = styled.aside`width: 357px; flex: none; display: flex; flex-direction: column;`;
const DockHead = styled.header`
  height: 28px; flex: none; display: flex; align-items: center; gap: 12px; padding: 0 8px 0 4px; color: #4f4f4f;
  background: linear-gradient(#9b9e9d, #b1b4b3); border-radius: 2px 2px 0 0; border-top: 1px solid #c4c6c6;
  h2 { margin: 0 auto 0 0; font: 400 14px/20px ${NOTO}; }
  button { width: 14px; height: 16px; display: grid; place-items: center; }
`;
const DockBody = styled.div`flex: 1; background: #fff; border-right: 2px solid #b4b6b8; border-bottom: 2px solid #b4b6b8;`;
const TreeHead = styled.div`
  height: 26px; display: grid; grid-template-columns: 233px 52px 61px 1fr; font: 15px/29px ${NOTO};
  span { padding-left: 6px; border-right: 1px solid #e4e4e4; }
  span:last-child { border: 0; }
`;
const Tree = styled.ul`height: 518px; display: grid; grid-template-rows: repeat(22, 1fr); font: 15px/20px ${NOTO}; color: #3b3b3b;`;
const Row = styled.li<{ $lvl: number; $last?: boolean }>`
  display: flex; align-items: center; gap: 5px; position: relative; padding-left: ${p => [3, 28, 52][p.$lvl]}px;
  ${p => p.$lvl > 0 && css`
    &::before { content: ''; position: absolute; left: 14px; top: 0; bottom: ${p.$last ? '50%' : '0'}; border-left: 1px dotted #9a9a9a; }
    &::after { content: ''; position: absolute; left: ${p.$lvl === 2 ? 39 : 14}px; top: 50%; width: 13px; border-top: 1px dotted #9a9a9a; }
  `}
`;
const ChildLine = styled.i<{ $last?: boolean }>`position: absolute; left: 38px; top: 0; bottom: ${p => (p.$last ? '50%' : '0')}; border-left: 1px dotted #9a9a9a;`;
const Expander = styled.button`
  position: absolute; left: 9px; top: 50%; width: 12px; height: 12px; margin-top: -6px; z-index: 1;
  background: #fff; border: 1px solid #9a9a9a; display: grid; place-items: center; color: #44588a;
`;
const TreeCheck = styled.input`
  appearance: none; width: 16px; height: 16px; margin: 0 -3px 0 3px; border: 1px solid #777; background: #fff; flex: none;
  &:checked::after { content: ''; display: block; width: 10px; height: 10px; margin: 2px; background: #111;
    clip-path: polygon(0 35%, 35% 60%, 100% 5%, 100% 45%, 35% 100%, 0 70%); }
`;
const DockTabs = styled.div`height: 29px; flex: none; display: flex; align-items: flex-start; padding-left: 3px;`;
const DockTab = styled.button<{ $on?: boolean }>`
  height: 26px; padding: 0 8px; color: #dedede; margin-right: 2px;
  ${p => p.$on && css`padding: 0 5px; color: #222; background: linear-gradient(#d8dde4, #fff); border-radius: 0 0 3px 3px; border: 1px solid #d5eaee; border-top: 0;`}
`;

const Center = styled.section`flex: 1; min-width: 0; display: flex; flex-direction: column;`;
const ViewFrame = styled.div`flex: 1; min-height: 0; background: #fff; padding: 2px 4px 2px; display: flex;`;
const View = styled.div`flex: 1; position: relative; overflow: hidden; border: 1px solid #8c8c8c; border-right-color: #e6e6e6; border-bottom-color: #e6e6e6; background: #fff;`;
const Scene = styled.svg`position: absolute; inset: 0; width: 100%; height: 100%;`;
const Ruler = styled.svg`position: absolute; left: 16px; top: 8px; width: 160px; height: 36px;`;
const Triad = styled.svg`position: absolute; right: 22px; bottom: 20px; width: 60px; height: 80px;`;

const DocBar = styled.div`
  height: 30px; flex: none; display: flex; align-items: flex-start; background: linear-gradient(#cfd3da, #b9bec8 45%, #979fad);
  font: 14px/26px ${NOTO}; color: #333;
`;
const DocArrow = styled.button`width: 24px; height: 26px; display: grid; place-items: center; color: #555;`;
const DocTab = styled.button<{ $w: number; $first?: boolean; $on?: boolean }>`
  width: ${p => p.$w}px; height: 27px; display: flex; align-items: center; gap: ${p => (p.$on ? 14 : 15)}px; overflow: visible;
  padding-left: 16px; border-right: 1px solid #888f9b;
  background: linear-gradient(#c6cad2, #b9bec8 50%, #a3aab7 52%, #a9b0bc);
  ${p => p.$first && css`padding-left: 36px; gap: 22px; clip-path: polygon(0 0, 100% 0, 100% 100%, 26px 100%);`}
  ${p => p.$on && css`background: #fff; font-weight: 700; color: #111; margin-left: -16px; padding-left: 36px; border: 0; clip-path: polygon(0 0, 100% 0, 100% 100%, 26px 100%);`}
`;
const DocFill = styled.span`flex: 1;`;
const Output = styled.section`height: 208px; flex: none; margin-top: 6px; display: flex; flex-direction: column; background: #fff;`;
const Log = styled.div`font: 16px/22px ${UI}; color: #333; display: grid; gap: 4px; p { margin: 0; padding-left: 3px; }`;

const Props = styled.aside`width: 259px; flex: none; background: #fff; display: flex; flex-direction: column;`;
const PropGroup = styled.h3`margin: 0; height: 24px; padding-left: 30px; background: #e8e8e8; color: #808080; font: 700 15px/24px ${UI};`;
const PropGrid = styled.div`flex: 1; display: grid; grid-template-columns: 1fr 1fr; i { border-right: 1px solid #ececec; }`;
const TaskStrip = styled.div`width: 21px; flex: none; margin-left: -6px; padding: 4px 0 0 2px; display: flex; flex-direction: column; gap: 15px;`;
const TaskPane = styled.button`
  height: 136px; writing-mode: vertical-rl; display: flex; align-items: center; gap: 14px; padding: 5px 0 0;
  font: 15px/17px "Liberation Sans", Arial, sans-serif; color: #85807a;
  background: linear-gradient(90deg, #fff0c4, #f8d98c); border: 1px solid #e8c878; border-right: 0;
`;
const Gem = styled.i`width: 15px; height: 15px; border-radius: 50%; background: radial-gradient(#8fd080 25%, #e4f4dc 50%, #9cc090);`;

/* ---------- status bar ---------- */
const Status = styled.footer`
  height: 23px; flex: none; display: flex; align-items: flex-start; overflow: hidden; background: linear-gradient(#3d414c, #3a3e48 38%, #2e2e2e 42%);
  color: #d4d4d4; font: 13px/28px ${NOTO}; padding-right: 16px;
`;
const Cell = styled.span<{ $w?: number }>`
  ${p => (p.$w ? css`width: ${p.$w}px; border-left: 1px solid #5a5a5a; padding-left: 3px;` : css`flex: 1;`)} white-space: nowrap; flex-shrink: 0;
`;
const Unit = styled.label`
  width: 51px; height: 26px; margin: 3px 0 0 3px; background: #fff; color: #333; display: flex; align-items: center; padding-right: 4px; flex: none;
  select { appearance: none; border: 0; background: none; flex: 1; width: 30px; padding: 0 0 0 4px; height: 26px; outline: 0; font: 14px/24px "Liberation Sans", Arial, sans-serif; }
`;

/* ---------- view toolbar ---------- */
const ViewBar = styled.div`
  position: absolute; top: 14px; left: calc(50% - 346px); height: 28px; display: flex; align-items: center; background: rgba(255,255,255,.92);
`;
const ViewSelect = styled.label`
  display: flex; height: 28px; width: 136px; margin-right: 3px; background: #fff; font: 14px/28px ${NOTO};
  select { appearance: none; border: 0; background: none; flex: 1; min-width: 0; padding: 0 0 0 8px; outline: 0; overflow: hidden; }
  span { width: 19px; background: linear-gradient(#b9bec8, #a2a9b5); display: grid; place-items: center; color: #444; }
`;

/* ---------- dialog ---------- */
const DialogLayer = styled.div`position: absolute; left: 169px; top: 171px; width: 353px;`;
const Dialog = styled.form`
  background: #f9f9f9; border-radius: 9px; overflow: hidden; font: 13px/18px ${NOTO}; color: #3a3a3a; padding-bottom: 7px;
  border: 1px solid #b9bbbe; box-shadow: 0 14px 44px 4px rgba(0,0,0,.42);
`;
const DialogHead = styled.header`
  height: 39px; display: flex; align-items: center; justify-content: space-between; padding: 0 12px 0 10px; background: #eff3f9;
  h2 { margin: 0; font: 400 15px/22px ${NOTO}; color: #222; }
`;
const Tabs = styled.div`display: flex; align-items: flex-end; margin: 15px 0 0 11px; height: 25px;`;
const Tab = styled.button<{ $on?: boolean }>`
  height: ${p => (p.$on ? 25 : 22)}px; padding: 0 6px; border: 1px solid #ececec; border-bottom: 0; background: ${p => (p.$on ? '#fbfbfb' : '#f5f5f5')};
`;
const Page = styled.div`margin: 0 9px 15px 11px; height: 178px; padding: 18px 18px 0 16px; border: 1px solid #ebebeb;`;
const Selected = styled.button`
  width: 100%; height: 28px; display: grid; grid-template-columns: 22px 1fr; align-items: center; padding-left: 6px;
  background: #cce4f7; border: 1px solid #4f93c8; border-radius: 4px; margin-bottom: 15px;
`;
const Field = styled.div<{ $gap: number }>`display: grid; grid-template-columns: 89px 1fr; align-items: center; height: 26px; margin-bottom: ${p => p.$gap}px;`;
const Text = styled.input<{ $active?: boolean }>`
  width: 100%; min-width: 0; height: 26px; text-align: right; padding: 0 6px; outline: 0; color: ${p => (p.$active ? '#333' : '#8c8c8c')};
  border: 1px solid #eee; background: ${p => (p.$active ? '#fff' : '#fafafa')};
  ${p => p.$active && css`border-bottom: 2px solid #2b7cba;`}
`;
const Check = styled.label`
  display: flex; align-items: center; gap: 3px; white-space: nowrap;
  input { appearance: none; flex: none; width: 18px; height: 18px; border: 2px solid #999; border-radius: 4px; background: #f7f7f7; }
`;
const Push = styled.button<{ $focus?: boolean }>`
  width: 74px; height: 25px; background: #fff; border: 1px solid ${p => (p.$focus ? '#4f9ad6' : '#d4d4d4')}; border-radius: 4px;
`;
const Wide = styled(Push)`display: block; width: auto; margin: 0 9px 13px 11px; min-width: calc(100% - 20px);`;
const SaveRow = styled.div`display: grid; grid-template-columns: 81px 1fr; align-items: center; margin: 0 9px 13px 11px;`;
const Actions = styled.div`display: flex; gap: 6px; padding: 0 9px 0 5px;`;
const IconPush = styled(Push)`width: 25px; display: grid; place-items: center; background: #f4f4f4;`;
const ActionGap = styled.span`flex: 1;`;

const Frame = styled.i<{ $x: number; $y: number; $w: number; $h: number }>`
  position: absolute; left: ${p => p.$x}px; top: ${p => p.$y}px; width: ${p => p.$w}px; height: ${p => p.$h}px; border: 4px solid #ee0000;
`;
const Badge = styled.b<{ $x: number; $y: number }>`
  position: absolute; left: ${p => p.$x}px; top: ${p => p.$y}px; width: 49px; height: 49px; border-radius: 50%;
  background: #ff0000; box-shadow: 0 3px 1px #9b9b9b; color: #fff; text-align: center; font: 700 27px/49px "Liberation Sans", Arial, sans-serif;
`;
const Marks = styled.svg`position: absolute; left: 304px; top: 127px; width: 22px; height: 50px;`;
const Note = styled.p`
  position: absolute; left: calc(50% + 126px); top: calc(50% - 66px); margin: 0; font: 43px/57px Inter, sans-serif; color: #111; width: 310px;
`;

/* isometric work-plane grid, centred on the world origin */
const CX = 1318, CY = 664, STEP = 133.2, SL = 0.577, HALF = 4;
const V = STEP / Math.cos(Math.PI / 6);
const seq = Array.from({ length: 41 }, (_, i) => i - 20);
const slant = (k: number, from: number, to: number) => `M${CX + from} ${CY + from * SL + (k * V) / 5}L${CX + to} ${CY + to * SL + (k * V) / 5}`;
const vert = (k: number) => {
  const dx = (k * STEP) / 5;
  return `M${CX + dx} ${CY + dx * SL - HALF * V}V${CY + dx * SL + HALF * V}`;
};
const R = HALF * STEP;
const GridScene = () => (
  <Scene viewBox="368 227 1901 873" preserveAspectRatio="xMidYMid slice" fill="none">
    <g stroke="#d2d2d2" strokeWidth="1">
      {seq.filter(k => k % 5).map(k => <g key={k}><path d={vert(k)} strokeDasharray="5 1" /><path d={slant(k, -R, R)} strokeDasharray="5 1" /></g>)}
    </g>
    <g stroke="#b4b4b4" strokeWidth="1">
      {seq.filter(k => k % 5 === 0).map(k => <g key={k}><path d={vert(k)} /><path d={slant(k, -R, R)} /></g>)}
    </g>
    <path d={slant(0, -1000, 1000)} stroke="#fcc8c8" strokeWidth="2" />
    <path d={slant(0, -R, R)} stroke="#dba0a0" strokeWidth="1.5" />
    <path d={`M${CX - 1000} ${CY + 1000 * SL}L${CX + 1000} ${CY - 1000 * SL}`} stroke="#b8f8b8" strokeWidth="2" />
    <path d={`M${CX} 200V1120`} stroke="#aaa8e4" strokeWidth="2" />
    <g stroke="#4a9a9c" strokeWidth="1"><path d="M1338 630V675L1299 697V652Z" /><path d="M1279 664L1318 642L1357 664L1318 686Z" /></g>
    <path d="M1299 630L1338 652V697L1299 674Z" stroke="#0c4a18" strokeWidth="3" />
    <rect x="1316" y="661" width="5" height="6" fill="#1cd8dc" />
    <path d="M1350 655H1445" stroke="#ee0000" strokeWidth="4" />
    <path d="M1337 655L1352 647V663Z" fill="#ee0000" />
  </Scene>
);

const TREE: [number, string, string, string?][] = [
  [0, 'compass', 'New Works'], [1, 'coord', 'Coordinate System', '+'], [1, 'datum', 'View Point'], [1, 'wp', 'Work Plane', '-'],
  [2, 'wpi', 'XY (0,0,1)'], [2, 'wpi', 'XZ (0,-1,0)'], [2, 'wpi', 'XZ (0,1,0)'], [2, 'wpi', 'YX (0,0,1)'], [2, 'wpi', 'YZ (1,0,0)'], [2, 'wpi', 'ZX (0,1,0)'], [2, 'wpi', 'ZY (1,0,0)'],
  [1, 'datum', 'Datum', '+'], [1, 'mat', 'Material', '+'], [1, 'prop', 'Property', '+'], [1, 'geo', 'Geometry', '+o'], [1, 'bed', 'Bedding Plane'],
  [1, 'exp', 'Export Shape'], [1, 'mctl', 'Mesh Control', '+'], [1, 'mesh', 'Mesh', '+x'], [1, 'contact', 'Contact', '+'], [1, 'elem', 'Element Parameters', '+'], [1, 'hinge', 'Hinge', '+'],
];

const HeadTools = () => <><button aria-label="Pin"><Pin /></button><button aria-label="Close"><Cross s={11} w={1.8} /></button></>;

export default function App() {
  return (
    <Shell>
      <Global />
      <Defs />
      <TitleBar>
        <QuickArea>
          <QuickBar>{['qnew', 'qopen', 'qsave', 'qfold', 'qfold2', 'undo', 'qlist', 'redo', 'qlist2'].map(n => <button key={n} aria-label={n}><Icon n={n} /></button>)}</QuickBar>
          <QuickMore aria-label="Customize"><Caret s={9} /></QuickMore>
        </QuickArea>
        <Title>GTS NX - [NXGT2]</Title>
        <WinButtons>
          <WinButton aria-label="Minimize"><Min /></WinButton><WinButton aria-label="Restore"><Restore /></WinButton><WinButton aria-label="Close"><Cross s={10} w={2.6} /></WinButton>
        </WinButtons>
      </TitleBar>
      <Orb aria-label="Application menu">
        <svg width="34" height="32" viewBox="0 0 34 32">
          <path d="M3 14L15 3V9L9 15L9 20Z" fill="#d8442a" /><path d="M3 14L15 26V20L9 14Z" fill="#e8a030" /><path d="M3 14L10 21L6 17Z" fill="#8a2010" />
          <path d="M14 10L18 6L28 15L20 22L18 16H22L18 12L14 16Z" fill="#1f8fa8" /><path d="M18 6L28 15L24 14L16 8Z" fill="#174f7c" />
          <text x="14" y="28" fontFamily={UI} fontWeight="700" fontSize="12" fill="#e8502a">NX</text>
        </svg>
      </Orb>
      <MenuBar>
        {['Geometry', 'Mesh', 'Static/Slope Analysis', 'Seepage/Consolidation Analysis', 'Dynamic Analysis', 'Thermal Analysis', 'Analysis', 'Result', 'Tools'].map((t, i) => <MenuTab key={t} $on={i === 0}>{t}</MenuTab>)}
        <MenuRight>
          {['Style', 'Background', 'Language'].map(t => <MenuDrop key={t}>{t}<Caret s={7} /></MenuDrop>)}
          <Help aria-label="Help">?</Help>
          <WinButtons $dark>
            <WinButton aria-label="Minimize view"><Min /></WinButton><WinButton aria-label="Restore view"><Restore /></WinButton><WinButton aria-label="Close view"><Cross s={8} w={2.4} /></WinButton>
          </WinButtons>
        </MenuRight>
      </MenuBar>

      <Ribbon>
        <Group name="Point & Curve" w={293}>
          <Tools w={284} cols={8} items={['point', 'circle', 'circle3', 'diamond', 'fillet', 'cross', 'drop', '', 'line', 'arc3', 'spline', 'helix', 'dash', 'trim', 'offset', 'dim', 'arc', 'rect', 'closed', 'ellipse', 'extend', 'openrect', 'bars']} />
        </Group>
        <Group name="Surface & Solid" w={213}>
          <Tools w={142} cols={4} items={['cyl', 'gem', 'quad', 'terrain', 'cone', 'sphere', 'filletcube', 'twocube', 'box', 'torus', 'chamfer', 'sheet']} />
          <Big w={62} icon="bedding">Bedding{'\n'}Plane</Big>
        </Group>
        <Group name="Boolean" w={124}><Big w={60} icon="bsolid">Solid</Big><Big w={56} icon="bsurf">Surface</Big></Group>
        <Group name="Divide" w={125}><Big w={60} icon="dsolid">Solid</Big><Big w={56} icon="dsurf">Surface</Big></Group>
        <Group name="Protrude" w={161}>
          <Big w={62} icon="extrude">Extrude</Big>
          <Cmds w={90} items={[c('revolve', 'Revolve'), c('loft', 'Loft'), c('sweep', 'Sweep')]} />
        </Group>
        <Group name="Transform" w={342}>
          <Cmds w={101} items={[c('move', 'Translate'), c('rotate', 'Rotate'), c('mirror', 'Mirror')]} />
          <Cmds w={151} items={[c('scale', 'Scale'), c('sweept', 'Sweep-Translate'), c('project', 'Project')]} />
          <Cmds w={80} items={[null, c('attach', 'Attach')]} />
        </Group>
        <Group name="Sub Shape" w={160}>
          <Big w={60} icon="sshape">Super{'\n'}Shape</Big>
          <Cmds w={92} items={[c('cremove', 'Remove'), c('cextract', 'Extract'), c('cexplode', 'Explode')]} />
        </Group>
        <Group name="Remove/Modify" w={166}>
          <Cmds w={160} items={[c('face', 'Face/Edge'), c('wand', 'Remove Manual'), c('imprint', 'Imprinted Object')]} />
        </Group>
        <Group name="Tools" w={480}>
          <Big w={60} icon="options">Options</Big>
          <Big w={129} icon="terrain">Terrain Geometry{'\n'}Maker <Caret s={9} /></Big>
          <Cmds w={137} items={[c('frame', 'Frame to Shell'), c('frame2', 'Frame to Solid'), c('checks', 'Check Shape', true)]} />
          <Cmds w={144} items={[null, c('checkd', 'Check Duplicate')]} />
        </Group>
      </Ribbon>

      <BarRow>
        {BARS.map((b, bi) => (
          <Bar key={b} $first={bi === 0}>
            {b.split('|').map((g, gi) => (
              <React.Fragment key={g}>
                {gi > 0 && <Sep />}
                {g.split(' ').map(raw => {
                  const n = raw.replace(/[*+]/, '');
                  return <React.Fragment key={n}><BarButton $on={raw.endsWith('*')} aria-label={n}><Icon n={n} /></BarButton>{raw.endsWith('+') && <BarDrop aria-label={`${n} options`}><Caret s={9} /></BarDrop>}</React.Fragment>;
                })}
              </React.Fragment>
            ))}
            <BarEnd aria-label="More"><Caret s={8} /></BarEnd>
          </Bar>
        ))}
      </BarRow>

      <Main>
        <LeftDock>
          <DockHead><h2>Model</h2><HeadTools /></DockHead>
          <DockBody>
            <TreeHead><span>Item</span><span>ID</span><span>Color</span><span /></TreeHead>
            <Tree>
              {TREE.map(([lvl, icon, label, m], i) => (
                <Row key={label} $lvl={lvl} $last={i === TREE.length - 1}>
                  {m && <Expander aria-label={`Toggle ${label}`}><svg width="8" height="8"><path d={m[0] === '+' ? 'M0 4H8M4 0V8' : 'M0 4H8'} stroke="currentColor" strokeWidth="1.3" /></svg></Expander>}
                  {lvl === 2 && <ChildLine $last={label.startsWith('ZY')} />}
                  {m && m[1] && <TreeCheck type="checkbox" aria-label={`Show ${label}`} defaultChecked={m[1] === 'x'} />}
                  <Icon n={icon} />{label}
                </Row>
              ))}
            </Tree>
          </DockBody>
          <DockTabs><DockTab $on>Model</DockTab><DockTab>Analysis</DockTab><DockTab>Results</DockTab></DockTabs>
        </LeftDock>

        <Center>
          <ViewFrame>
            <View>
              <GridScene />
              <Ruler fill="none">
                <path d="M4 9H133M4 2V18M68.5 6V18M133 2V18M4 2H133" stroke="#bdbdbd" />
                <path d="M4 4H68M69 11H133" stroke="#b4b4b4" strokeWidth="4" />
                <g fill="#b8b8b8" fontFamily="DejaVu Sans, sans-serif" fontSize="13"><text x="137" y="11">m</text><text x="2" y="33">0</text><text x="58" y="33">34.1</text><text x="121" y="33">68.2</text></g>
              </Ruler>
              <Triad viewBox="2187 998 60 80" fill="none">
                <path d="M2193 1046L2214 1034" stroke="#10e810" strokeWidth="4" /><path d="M2221 1030L2216 1040L2208 1031Z" fill="#10e810" />
                <path d="M2193 1046L2214 1058" stroke="#d01010" strokeWidth="4" /><path d="M2221 1062L2209 1061L2216 1052Z" fill="#d01010" />
                <path d="M2193 1046V1022" stroke="#1010d0" strokeWidth="4" /><path d="M2193 1014L2198 1024H2188Z" fill="#1010d0" /><circle cx="2193" cy="1047" r="3.5" fill="#d8c818" stroke="#6a6210" />
                <g fontFamily="Liberation Sans, Arial, sans-serif" fontSize="13"><text x="2194" y="1010" fill="#5050ff">Z</text><text x="2228" y="1027" fill="#58f058">Y</text><text x="2228" y="1067" fill="#ff5050">X</text></g>
              </Triad>
              <ViewBar>
                <BarButton $on aria-label="Select"><Icon n="selA" /></BarButton><BarButton aria-label="Pick"><Icon n="selB" /></BarButton><Sep />
                <BarButton aria-label="Snap"><Icon n="selC" /></BarButton><BarDrop aria-label="Snap options"><Caret /></BarDrop><Sep />
                <ViewSelect><select aria-label="Filter"><option>Basic</option></select><span><Caret /></span></ViewSelect>
                <ViewSelect><select aria-label="Target"><option>Datum Plane (U</option></select><span><Caret /></span></ViewSelect><Sep />
                {['selD', 'selE', 'list'].map(n => <BarButton key={n} aria-label={n}><Icon n={n} /></BarButton>)}<Sep />
                {['xsel', 'qsel'].map(n => <BarButton key={n} aria-label={n}><Icon n={n} /></BarButton>)}<Sep />
                {['csel', 'cno'].map(n => <BarButton key={n} aria-label={n}><Icon n={n} /></BarButton>)}<Sep />
                <BarButton aria-label="Clear"><Icon n="brush" /></BarButton>
              </ViewBar>
              <Note>Selected work plane</Note>
              <DialogLayer>
                <Dialog onSubmit={e => e.preventDefault()}>
                  <DialogHead><h2>Move Work Plane</h2><button type="button" aria-label="Close"><Cross s={15} w={1.2} /></button></DialogHead>
                  <Tabs><Tab type="button" $on>Ref. Plane</Tab><Tab type="button">Three Points</Tab><Tab type="button">Normal</Tab></Tabs>
                  <Page>
                    <Selected type="button"><Icon n="arrowin" /><span>Plane Selected</span></Selected>
                    <Field $gap={9}><label htmlFor="offset">Offset</label><Text id="offset" $active defaultValue="100" /></Field>
                    <Field $gap={10}><Check><input type="checkbox" />Origin</Check><Text aria-label="Origin point" defaultValue="0, 0, 0" /></Field>
                    <Field $gap={0}><Check><input type="checkbox" />Reverse Normal</Check></Field>
                  </Page>
                  <Wide type="button">Reset to GCS</Wide>
                  <SaveRow><Check><input type="checkbox" />Save</Check><Text aria-label="Saved plane name" /></SaveRow>
                  <Actions>
                    <IconPush type="button" aria-label="Preview"><Icon n="preview" s={20} /></IconPush><IconPush type="button" aria-label="Erase"><Icon n="eraser" s={20} /></IconPush>
                    <ActionGap /><Push>OK</Push><Push type="button">Cancel</Push><Push type="button" $focus>Apply</Push>
                  </Actions>
                </Dialog>
                <Marks viewBox="0 0 22 50"><ellipse cx="11" cy="6" rx="10.5" ry="6" fill="#ff5cd6" /><path d="M4 9C8 7 14 7 18 9L11 16Z" fill="#f000b8" /><ellipse cx="11" cy="44" rx="10.5" ry="5.5" fill="#ff5cd6" /><path d="M11 34L20 42C15 44 7 44 2 42Z" fill="#f000b8" /></Marks>
                <Frame $x={-4} $y={40} $w={106} $h={45} /><Frame $x={-4} $y={93} $w={334} $h={86} /><Frame $x={98} $y={336} $w={107} $h={45} />
                <Badge $x={-61} $y={-5}>3</Badge><Badge $x={-66} $y={89}>4</Badge><Badge $x={54} $y={377}>5</Badge>
              </DialogLayer>
            </View>
          </ViewFrame>
          <DocBar>
            <DocArrow aria-label="Previous tabs"><svg width="8" height="10"><path d="M7 1V9L1 5Z" fill="none" stroke="currentColor" /></svg></DocArrow>
            <DocTab $w={306} $first><Icon n="doc" s={20} />2D Slope Stability Using Nail.gts</DocTab>
            <DocTab $w={174}><Icon n="doc" s={20} />Nonlinear Graph</DocTab>
            <DocTab $w={100}><Icon n="doc" s={20} />NXGT1</DocTab>
            <DocTab $w={152} $on><Icon n="doc" s={20} />NXGT2<Cross s={10} w={2} /></DocTab>
            <DocFill />
            <DocArrow aria-label="Next tabs"><svg width="8" height="10"><path d="M1 1V9L7 5Z" fill="none" stroke="currentColor" /></svg></DocArrow>
          </DocBar>
          <Output>
            <DockHead><h2>Output</h2><HeadTools /></DockHead>
            <Log>
              <p>&gt; GTS NX 2024 (v1.1) (64bit)</p>
              <p>&gt; Copyright (C) SINCE 1989 MIDAS Information Technology Co., Ltd. ALL RIGHTS RESERVED.</p>
              <p>&gt; Work project is being saved by auto-save function.</p>
            </Log>
          </Output>
        </Center>

        <Props>
          <DockHead><h2>Properties</h2><HeadTools /></DockHead>
          <PropGroup>General</PropGroup>
          <PropGrid><i /></PropGrid>
        </Props>
        <TaskStrip><TaskPane><Gem />Task Pane</TaskPane><TaskPane><Gem />Task Pane</TaskPane></TaskStrip>
      </Main>

      <Status>
        <Cell /><Cell $w={221}>W: 631.266, -592.113</Cell><Cell $w={360} /><Cell $w={251}>G:[2] N:[0] E:[0]</Cell>
        {['kN', 'm', 'J', 'sec'].map(u => <Unit key={u}><select aria-label={`Unit ${u}`}><option>{u}</option></select><svg width="11" height="7" fill="none"><path d="M1 1L5.5 6L10 1" stroke="#777" strokeWidth="1.2" /></svg></Unit>)}
      </Status>
    </Shell>
  );
}
